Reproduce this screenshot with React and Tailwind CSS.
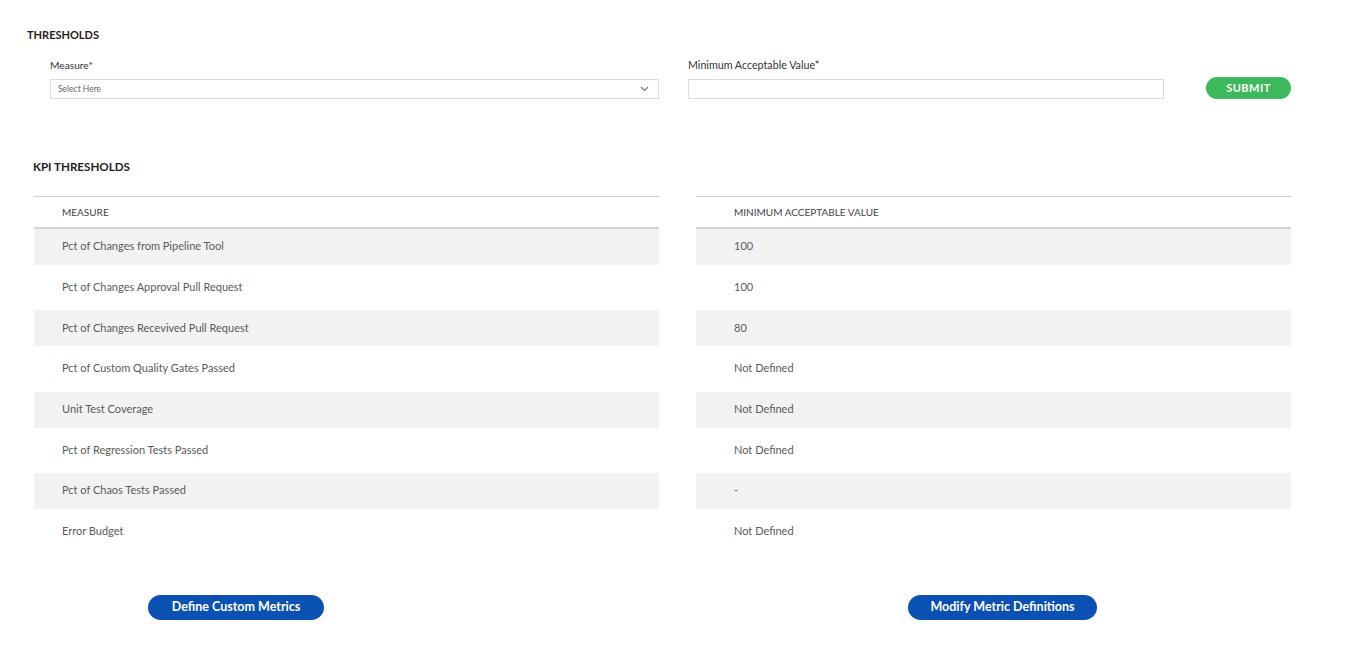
import React from "react";

const rows = [
  ["Pct of Changes from Pipeline Tool", "100"],
  ["Pct of Changes Approval Pull Request", "100"],
  ["Pct of Changes Recevived Pull Request", "80"],
  ["Pct of Custom Quality Gates Passed", "Not Defined"],
  ["Unit Test Coverage", "Not Defined"],
  ["Pct of Regression Tests Passed", "Not Defined"],
  ["Pct of Chaos Tests Passed", "-"],
  ["Error Budget", "Not Defined"],
];

function Table({ header, values, width, pad }) {
  return (
    <div className={`${width} flex flex-col`}>
      <div className={`h-[33px] border-t border-[#cfcfcf] border-b-2 border-b-[#d4d4d4] flex items-center ${pad} text-[10px] text-[#444]`}>
        {header}
      </div>
      <div className="flex flex-col gap-[4.7px]">
        {values.map((v, i) => (
          <div
            key={i}
            className={`h-[36px] flex items-center pb-[1px] ${pad} text-[11px] text-[#5a5a5a] ${i % 2 === 0 ? "bg-[#f2f2f2]" : "bg-white"}`}
          >
            {v}
          </div>
        ))}
      </div>
    </div>
  );
}

export default function App() {
  return (
    <div className="w-[1346px] h-[656px] bg-white" style={{ fontFamily: "Lato, 'Noto Sans', sans-serif" }}>
      <div className="pt-[28px] pl-[27px] text-[11px] font-bold text-[#1e1e1e] leading-[14px]">THRESHOLDS</div>
      <div className="flex items-start mt-[17px]">
        <div className="ml-[50px] w-[609px] flex flex-col">
          <div className="text-[10.2px] text-[#333] leading-[12px]">Measure*</div>
          <div className="mt-[8px] h-[20px] border border-[#dcdcdc] flex items-center justify-between pl-[7px] pr-[9px]">
            <span className="text-[8.5px] text-[#666]">Select Here</span>
            <svg width="9" height="6" viewBox="0 0 9 6" fill="none" stroke="#777" strokeWidth="1.2">
              <path d="M1 1l3.5 3.5L8 1" />
            </svg>
          </div>
        </div>
        <div className="ml-[29px] w-[476px] flex flex-col">
          <div className="text-[10.7px] text-[#333] leading-[12px]">Minimum Acceptable Value*</div>
          <div className="mt-[8px] h-[20px] border border-[#dcdcdc]"></div>
        </div>
        <button className="ml-[42px] mt-[18px] w-[85px] h-[22px] rounded-full bg-[#3db85a] text-white text-[11px] font-bold tracking-[0.5px] flex items-center justify-center">
          SUBMIT
        </button>
      </div>
      <div className="mt-[61px] pl-[33px] text-[11.6px] font-bold text-[#1e1e1e] leading-[14px]">KPI THRESHOLDS</div>
      <div className="flex mt-[22px] pl-[34px] gap-[37px]">
        <Table header="MEASURE" values={rows.map((r) => r[0])} width="w-[625px]" pad="pl-[28px]" />
        <Table header="MINIMUM ACCEPTABLE VALUE" values={rows.map((r) => r[1])} width="w-[595px]" pad="pl-[38px]" />
      </div>
      <div className="flex mt-[45px]">
        <button className="ml-[148px] w-[176px] h-[25px] rounded-full bg-[#0b51b3] text-white text-[12.5px] font-bold flex items-center justify-center">
          Define Custom Metrics
        </button>
        <button className="ml-[584px] w-[189px] h-[25px] rounded-full bg-[#0b51b3] text-white text-[12.5px] font-bold flex items-center justify-center">
          Modify Metric Definitions
        </button>
      </div>
    </div>
  );
}
